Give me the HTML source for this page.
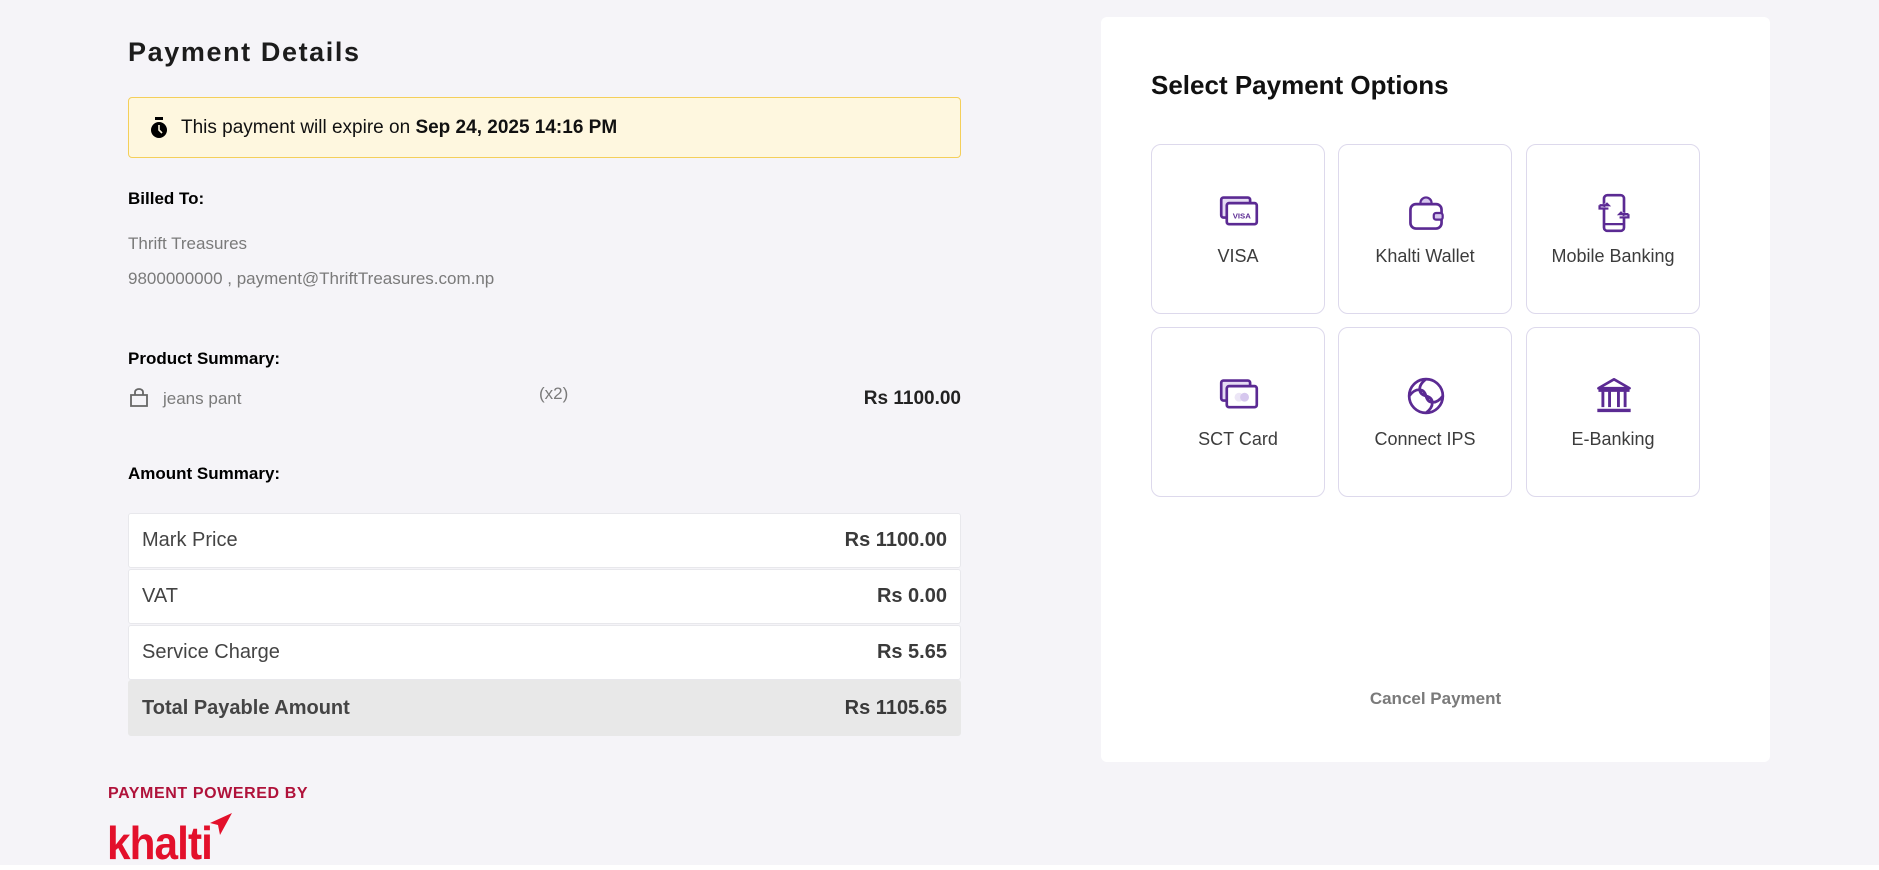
<!DOCTYPE html>
<html><head><meta charset="utf-8"><style>
*{box-sizing:border-box;margin:0;padding:0}
body{width:1879px;height:870px;background:#f5f4f8;font-family:"Liberation Sans",Arial,sans-serif;position:relative;overflow:hidden}
.a{position:absolute}
h1{position:absolute;left:128px;top:37px;font-size:27px;font-weight:600;letter-spacing:1.6px;color:#1c1c1c}
.alert{left:128px;top:97px;width:833px;height:61px;background:#fef7df;border:1px solid #f4cf5a;border-radius:4px;font-size:19px;color:#111;display:flex;align-items:center;padding-left:20px}
.lbl{left:128px;font-size:17px;font-weight:bold;color:#000}
.g{left:128px;font-size:17px;color:#7a7a7a}
.row{left:128px;width:833px;height:55px;background:#fff;border:1px solid #e8e8ec;border-radius:3px;display:flex;justify-content:space-between;align-items:center;padding:0 13px;font-size:20px;color:#444}
.row b{color:#3a3a3a}
.card{left:1101px;top:17px;width:669px;height:745px;background:#fff;border-radius:6px}
.tile{position:absolute;width:174px;height:170px;border:1px solid #ddd9ec;border-radius:10px;background:#fff;text-align:center}
.tile svg{position:absolute;left:67px;top:48px}
.tile span{position:absolute;left:0;right:0;top:101px;font-size:18px;color:#3c3c3c}
</style></head><body>
<h1>Payment Details</h1>
<div class="a alert"><svg width="20" height="22" viewBox="0 0 20 22" style="margin-right:12px"><rect x="6" y="0" width="8" height="3" fill="#000"/><circle cx="10" cy="13" r="8" fill="#000"/><path d="M10 8v5l3 3" stroke="#fef7df" stroke-width="1.6" fill="none"/></svg>This payment will expire on&nbsp;<b>Sep 24, 2025 14:16 PM</b></div>
<div class="a lbl" style="top:189px">Billed To:</div>
<div class="a g" style="top:234px">Thrift Treasures</div>
<div class="a g" style="top:269px">9800000000 , payment@ThriftTreasures.com.np</div>
<div class="a lbl" style="top:349px">Product Summary:</div>
<svg class="a" style="left:129px;top:388px" width="20" height="20" viewBox="0 0 20 20"><path d="M2 7h16v11H2z M6 7V4a4 3 0 0 1 8 0v3" stroke="#666" stroke-width="1.8" fill="none"/></svg>
<div class="a g" style="left:163px;top:389px">jeans pant</div>
<div class="a g" style="left:539px;top:384px">(x2)</div>
<div class="a" style="left:700px;width:261px;text-align:right;top:388px;font-size:19px;font-weight:bold;color:#222">Rs 1100.00</div>
<div class="a lbl" style="top:464px">Amount Summary:</div>
<div class="a row" style="top:513px"><span>Mark Price</span><b>Rs 1100.00</b></div>
<div class="a row" style="top:569px"><span>VAT</span><b>Rs 0.00</b></div>
<div class="a row" style="top:625px"><span>Service Charge</span><b>Rs 5.65</b></div>
<div class="a row" style="top:680px;height:56px;background:#e8e8e8;border-color:#e8e8e8;font-weight:bold"><span>Total Payable Amount</span><b>Rs 1105.65</b></div>
<div class="a" style="left:108px;top:785px;font-size:16px;font-weight:bold;color:#b0123a;letter-spacing:0.6px">PAYMENT POWERED BY</div>
<div class="a" style="left:107px;top:818px;font-size:46px;color:#e3102b;letter-spacing:-1px;line-height:50px;font-weight:bold;transform:scaleX(0.92);transform-origin:left">khalti</div>
<svg class="a" style="left:204px;top:812px" width="30" height="28" viewBox="0 0 30 28"><path d="M28 1L6 11l8 2 2 10z" fill="#e3102b"/></svg>
<div class="a" style="left:0;top:865px;width:1879px;height:5px;background:#fff"></div>

<div class="a card">
<div class="a" style="left:50px;top:53px;font-size:26px;font-weight:bold;color:#111">Select Payment Options</div>
<div class="tile" style="left:50px;top:127px"><svg width="40" height="38" viewBox="0 0 36 34"><rect x="2" y="4" width="26" height="18" rx="2" fill="#e5dcf3" stroke="#5b2a93" stroke-width="2.4"/><rect x="7" y="9" width="27" height="19" rx="2" fill="#fff" stroke="#5b2a93" stroke-width="2.4"/><text x="20.5" y="23" font-size="7" font-weight="bold" fill="#5b2a93" text-anchor="middle" font-family="Liberation Sans">VISA</text></svg><span>VISA</span></div>
<div class="tile" style="left:237px;top:127px"><svg width="40" height="40" viewBox="0 0 36 36"><circle cx="18" cy="9" r="5" fill="#d6c7ee" stroke="#5b2a93" stroke-width="2"/><rect x="4" y="10" width="28" height="22" rx="5" fill="#fff" stroke="#5b2a93" stroke-width="2.4"/><rect x="25" y="18" width="8" height="6" rx="2" fill="#d6c7ee" stroke="#5b2a93" stroke-width="2"/></svg><span>Khalti Wallet</span></div>
<div class="tile" style="left:425px;top:127px"><svg width="40" height="40" viewBox="0 0 36 36"><rect x="9" y="2" width="18" height="32" rx="3" fill="#fff" stroke="#5b2a93" stroke-width="2.4"/><line x1="9" y1="28" x2="27" y2="28" stroke="#5b2a93" stroke-width="2"/><path d="M5 11h8l-2-2M5 11v3h8" stroke="#5b2a93" stroke-width="2" fill="#d6c7ee"/><path d="M31 19h-8l2-2M31 19v3h-8" stroke="#5b2a93" stroke-width="2" fill="#d6c7ee"/></svg><span>Mobile Banking</span></div>
<div class="tile" style="left:50px;top:310px"><svg width="40" height="38" viewBox="0 0 36 34"><rect x="2" y="4" width="26" height="18" rx="2" fill="#e5dcf3" stroke="#5b2a93" stroke-width="2.4"/><rect x="7" y="9" width="27" height="19" rx="2" fill="#fff" stroke="#5b2a93" stroke-width="2.4"/><circle cx="18" cy="19" r="4" fill="#ece6f6"/><circle cx="23" cy="19" r="4" fill="#d6c7ee"/></svg><span>SCT Card</span></div>
<div class="tile" style="left:237px;top:310px"><svg width="40" height="40" viewBox="0 0 38 38"><g fill="none" stroke="#5b2a93" stroke-width="2.6"><circle cx="19" cy="19" r="16"/><path d="M19 3c-8 6-8 14 0 16s8 10 0 16M3 19c6-8 14-8 16 0s10 8 16 0"/></g></svg><span>Connect IPS</span></div>
<div class="tile" style="left:425px;top:310px"><svg width="40" height="40" viewBox="0 0 36 36"><path d="M4 11L18 3l14 8z" fill="#fff" stroke="#5b2a93" stroke-width="2.4" stroke-linejoin="round"/><g stroke="#5b2a93" stroke-width="2.6"><line x1="4" y1="13" x2="32" y2="13"/><line x1="8" y1="14" x2="8" y2="28"/><line x1="14" y1="14" x2="14" y2="28"/><line x1="22" y1="14" x2="22" y2="28"/><line x1="28" y1="14" x2="28" y2="28"/><line x1="3" y1="31" x2="33" y2="31" stroke-width="3"/></g></svg><span>E-Banking</span></div>
<div class="a" style="left:0;right:0;top:672px;text-align:center;font-size:17px;font-weight:bold;color:#7a7a7a">Cancel Payment</div>
</div>
</body></html>
